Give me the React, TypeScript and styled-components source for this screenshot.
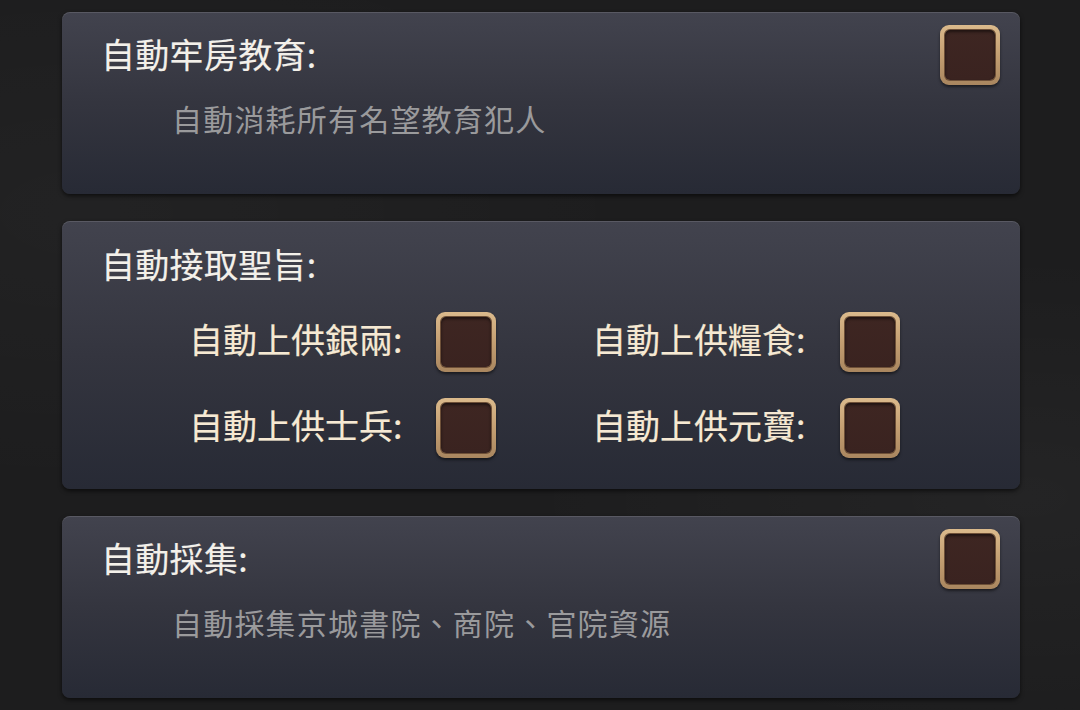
import React from 'react';
import styled, { createGlobalStyle } from 'styled-components';

const GlobalStyle = createGlobalStyle`
	html, body {
		margin: 0;
		padding: 0;
		background: #1d1d1e;
	}
	body {
		font-family: 'Noto Sans CJK TC', 'Noto Sans CJK SC', sans-serif;
		width: 1080px;
		height: 710px;
		overflow: hidden;
	}
`;

type Option = { label: string };

const tributes: Option[] = [
	{ label: '自動上供銀兩:' },
	{ label: '自動上供糧食:' },
	{ label: '自動上供士兵:' },
	{ label: '自動上供元寶:' },
];

export default function App() {
	return (
		<Page>
			<GlobalStyle />
			<List>
				<Card>
					<CardHead>
						<Title>自動牢房教育:</Title>
						<CheckBox />
					</CardHead>
					<Description>自動消耗所有名望教育犯人</Description>
				</Card>

				<Card $tall>
					<Title>自動接取聖旨:</Title>
					<OptionGrid>
						{tributes.map((item) => (
							<OptionRow key={item.label}>
								<OptionLabel>{item.label}</OptionLabel>
								<CheckBox />
							</OptionRow>
						))}
					</OptionGrid>
				</Card>

				<Card>
					<CardHead>
						<Title>自動採集:</Title>
						<CheckBox />
					</CardHead>
					<Description>自動採集京城書院、商院、官院資源</Description>
				</Card>
			</List>
		</Page>
	);
}

const Page = styled.div`
	width: 1080px;
	height: 710px;
	background:
		radial-gradient(ellipse at 8% 30%, rgba(255, 255, 255, 0.025), transparent 40%),
		radial-gradient(ellipse at 95% 70%, rgba(255, 255, 255, 0.03), transparent 35%),
		#1d1d1e;
	overflow: hidden;
`;

const List = styled.div`
	display: flex;
	flex-direction: column;
	gap: 27px;
	padding: 12px 0 0 62px;
	width: 958px;
`;

const Card = styled.section<{ $tall?: boolean }>`
	box-sizing: border-box;
	height: ${({ $tall }) => ($tall ? '268px' : '182px')};
	padding: ${({ $tall }) => ($tall ? '14px 20px 0 39px' : '13px 20px 0 39px')};
	border-radius: 8px;
	background: linear-gradient(180deg, #42434e 0%, #34353f 50%, #272a35 100%);
	box-shadow:
		inset 0 1px 0 rgba(255, 255, 255, 0.12),
		0 2px 4px rgba(0, 0, 0, 0.6);
`;

const CardHead = styled.div`
	display: flex;
	justify-content: space-between;
	align-items: flex-start;
	height: 60px;
`;

const Title = styled.h2`
	margin: 9px 0 0;
	font-size: 34px;
	line-height: 40px;
	font-weight: 400;
	color: #f3f0ea;
	letter-spacing: 0.3px;
	-webkit-text-stroke: 0.15px #f3f0ea;
`;

const Description = styled.p`
	margin: 13px 0 0 71px;
	font-size: 30px;
	line-height: 40px;
	font-weight: 400;
	color: #9a9a9c;
	letter-spacing: 1.2px;
`;

const OptionGrid = styled.div`
	display: grid;
	grid-template-columns: 307px 308px;
	column-gap: 96px;
	row-gap: 26px;
	margin: 28px 0 0 88px;
`;

const OptionRow = styled.div`
	display: flex;
	align-items: center;
	justify-content: space-between;
	height: 60px;
`;

const OptionLabel = styled.span`
	font-size: 34px;
	line-height: 40px;
	font-weight: 400;
	color: #f6e9d3;
	-webkit-text-stroke: 0.2px #f6e9d3;
	margin-top: -6px;
`;

const CheckBox = styled.div`
	box-sizing: border-box;
	flex: none;
	width: 60px;
	height: 60px;
	padding: 5px;
	border-radius: 9px;
	background: linear-gradient(180deg, #dbba8c 0%, #c49f72 50%, #a9865f 100%);
	box-shadow: 0 2px 3px rgba(0, 0, 0, 0.5);

	&::after {
		content: '';
		display: block;
		width: 100%;
		height: 100%;
		box-sizing: border-box;
		border-radius: 5px;
		background: linear-gradient(180deg, #3e2622 0%, #3a2320 100%);
		box-shadow:
			0 0 0 1px #6e5038,
			inset 0 2px 3px rgba(0, 0, 0, 0.5);
	}
`;
